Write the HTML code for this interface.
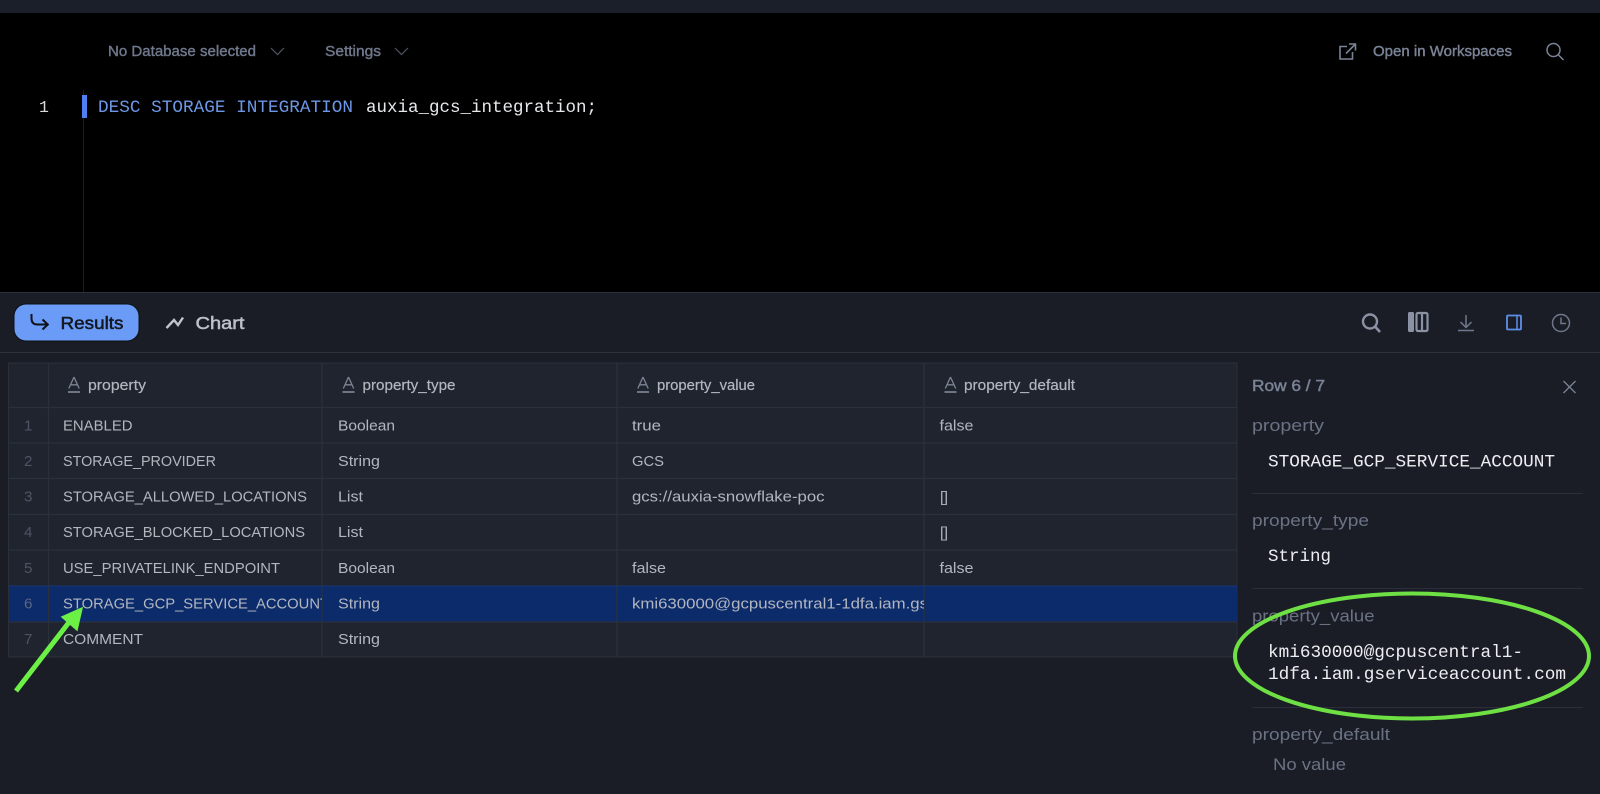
<!DOCTYPE html>
<html><head><meta charset="utf-8"><title>Results</title>
<style>
html,body{margin:0;padding:0;background:#1a1d26;width:1600px;height:794px;overflow:hidden}
svg{display:block}
text{font-family:"Liberation Sans",sans-serif}
.m{font-family:"Liberation Mono",monospace;font-size:17.7px}
.c{font-size:15.2px;fill:#b2b6bf}
.n{font-size:15.2px;fill:#4d5464}
.h{font-size:15.2px;fill:#b2b6bf;stroke:#b2b6bf;stroke-width:.2px}
.t{font-size:15.5px;fill:#7a8396;stroke:#7a8396;stroke-width:.45px}
.w{font-size:14.5px;fill:#6f788b;stroke:#6f788b;stroke-width:.4px}
.l{font-size:17px;fill:#6a7284}
.ln{fill:none;stroke:#2c313c;stroke-width:1}
.ic{fill:none;stroke:#7a8396;stroke-width:1.5}
</style></head><body>
<svg width="1600" height="794" viewBox="0 0 1600 794" xmlns="http://www.w3.org/2000/svg">
<defs>
<clipPath id="c1"><rect x="49" y="586" width="273" height="36"/></clipPath>
<clipPath id="c2"><rect x="618" y="586" width="306" height="36"/></clipPath>
<g id="A"><path d="M.8 11.500 L5.800 .5 H6.200 L11.200 11.500 M2.800 7.800 H9.200" fill="none" stroke="#7d8494" stroke-width="1.300"/><path d="M0 15 H12" stroke="#7d8494" stroke-width="1.700"/></g>
</defs>
<rect width="1600" height="794" fill="#1a1d26"/>
<rect y="13" width="1600" height="279" fill="#000"/>
<rect y="0" width="1600" height="13" fill="#1b1f29"/>
<path d="M83.500 90 V292" stroke="#1a1d26" stroke-width="1"/>

<text x="108" y="56" class="w" textLength="148" lengthAdjust="spacingAndGlyphs">No Database selected</text>
<path d="M271 48 L277.500 54.500 L284 48" class="ic" style="stroke:#4f5665;stroke-width:1.200"/>
<text x="325" y="56" class="w" textLength="56" lengthAdjust="spacingAndGlyphs">Settings</text>
<path d="M395 48 L401.500 54.500 L408 48" class="ic" style="stroke:#4f5665;stroke-width:1.200"/>

<g class="ic" style="stroke-width:1.600"><path d="M1347 46.500 H1340 V59 H1352.500 V52"/><path d="M1346 53.500 L1355 44.500 M1349 44 H1355.500 V50.500"/></g>
<text x="1373" y="56" class="w" style="fill:#7a8396;stroke:#7a8396" textLength="139" lengthAdjust="spacingAndGlyphs">Open in Workspaces</text>
<circle cx="1553.500" cy="50" r="6.500" class="ic"/><path d="M1558.500 55 L1563.500 60" class="ic"/>

<text x="39" y="112" style="font-family:'Liberation Mono',monospace;font-size:16.500px" fill="#d8dade">1</text>
<rect x="82" y="95" width="5" height="23" fill="#4f7ff0"/>
<text x="98" y="112" class="m" fill="#6d97e6" textLength="255" lengthAdjust="spacingAndGlyphs">DESC STORAGE INTEGRATION</text>
<text x="366" y="112" class="m" fill="#e6e8ec" textLength="231" lengthAdjust="spacingAndGlyphs">auxia_gcs_integration;</text>

<path d="M0 292.500 H1600 M0 352.500 H1600" class="ln"/>

<rect x="14" y="304" width="125" height="37" rx="12" fill="#6a9bf6" stroke="#0d1016" stroke-width="1"/>
<path d="M31.500 314 V318.500 Q31.500 324.500 37.500 324.500 H47 M42.500 319.500 L47.800 324.500 L42.500 329.500" fill="none" stroke="#0f1218" stroke-width="2"/>
<text x="60.500" y="329" font-size="17.500" fill="#14171f" stroke="#14171f" stroke-width=".5" textLength="63" lengthAdjust="spacingAndGlyphs">Results</text>
<path d="M166.500 328 L174 320 L178 325 L183 317.500" fill="none" stroke="#c0c4cc" stroke-width="2.400"/>
<text x="195.500" y="329" font-size="17.500" fill="#bcc0c9" stroke="#bcc0c9" stroke-width=".5" textLength="49" lengthAdjust="spacingAndGlyphs">Chart</text>

<circle cx="1370" cy="321.500" r="7" fill="none" stroke="#8a92a3" stroke-width="2.400"/><path d="M1375.500 327 L1380 332" stroke="#8a92a3" stroke-width="2.600"/>
<rect x="1408" y="312" width="6" height="20" rx="1.500" fill="#8a92a3"/>
<rect x="1416.500" y="313" width="11" height="18" rx="1.500" fill="none" stroke="#8a92a3" stroke-width="2.200"/><path d="M1422 313 V331" stroke="#8a92a3" stroke-width="2.200"/>
<path d="M1466 315 V327 M1460.500 322 L1466 327.500 L1471.500 322 M1458 330.500 H1474" fill="none" stroke="#6f788b" stroke-width="1.500"/>
<rect x="1507" y="315.500" width="14" height="14" rx="1" fill="none" stroke="#5e8fe8" stroke-width="1.800"/><path d="M1517 315.500 V329.500" stroke="#5e8fe8" stroke-width="1.500"/>
<circle cx="1561" cy="323" r="8.500" fill="none" stroke="#6f788b" stroke-width="1.500"/><path d="M1561 317.500 V323.500 H1566" fill="none" stroke="#6f788b" stroke-width="1.500"/>

<!-- table -->
<rect x="8.500" y="363" width="1228.500" height="294" fill="#1f242e" stroke="#2b303b" stroke-width="1"/>
<rect x="9" y="586" width="1228" height="36" fill="#0c2b6b"/>
<g stroke="#2b303b" stroke-width="1.300">
<path d="M8 407.500 H1237 M8 443 H1237 M8 478.500 H1237 M8 514.500 H1237 M8 550 H1237 M8 622 H1237"/>
<path d="M48.500 363 V657 M322 363 V657 M617 363 V657 M924 363 V657"/>
</g>
<path d="M8 586 H1237" stroke="#1a3672" stroke-width="1"/>

<use href="#A" x="68" y="377"/><text x="88" y="390" class="h" textLength="58" lengthAdjust="spacingAndGlyphs">property</text>
<use href="#A" x="342.500" y="377"/><text x="362.500" y="390" class="h" textLength="93" lengthAdjust="spacingAndGlyphs">property_type</text>
<use href="#A" x="637" y="377"/><text x="657" y="390" class="h" textLength="98" lengthAdjust="spacingAndGlyphs">property_value</text>
<use href="#A" x="944.500" y="377"/><text x="964" y="390" class="h" textLength="111" lengthAdjust="spacingAndGlyphs">property_default</text>

<text x="24" y="430.500" class="n">1</text><text x="24" y="466" class="n">2</text><text x="24" y="501.500" class="n">3</text><text x="24" y="537" class="n">4</text><text x="24" y="573" class="n">5</text><text x="24" y="608.500" class="n" style="fill:#5a6880">6</text><text x="24" y="644" class="n">7</text>

<text x="63" y="430.500" class="c" textLength="69.500" lengthAdjust="spacingAndGlyphs">ENABLED</text>
<text x="63" y="466" class="c" textLength="153" lengthAdjust="spacingAndGlyphs">STORAGE_PROVIDER</text>
<text x="63" y="501.500" class="c" textLength="244" lengthAdjust="spacingAndGlyphs">STORAGE_ALLOWED_LOCATIONS</text>
<text x="63" y="537" class="c" textLength="242" lengthAdjust="spacingAndGlyphs">STORAGE_BLOCKED_LOCATIONS</text>
<text x="63" y="573" class="c" textLength="217" lengthAdjust="spacingAndGlyphs">USE_PRIVATELINK_ENDPOINT</text>
<g clip-path="url(#c1)"><text x="63" y="608.500" class="c" textLength="266" lengthAdjust="spacingAndGlyphs">STORAGE_GCP_SERVICE_ACCOUNT</text></g>
<text x="63" y="644" class="c" textLength="80" lengthAdjust="spacingAndGlyphs">COMMENT</text>

<text x="338" y="430.500" class="c" textLength="57" lengthAdjust="spacingAndGlyphs">Boolean</text>
<text x="338" y="466" class="c" textLength="42" lengthAdjust="spacingAndGlyphs">String</text>
<text x="338" y="501.500" class="c" textLength="25" lengthAdjust="spacingAndGlyphs">List</text>
<text x="338" y="537" class="c" textLength="25" lengthAdjust="spacingAndGlyphs">List</text>
<text x="338" y="573" class="c" textLength="57" lengthAdjust="spacingAndGlyphs">Boolean</text>
<text x="338" y="608.500" class="c" textLength="42" lengthAdjust="spacingAndGlyphs">String</text>
<text x="338" y="644" class="c" textLength="42" lengthAdjust="spacingAndGlyphs">String</text>

<text x="632" y="430.500" class="c" textLength="29" lengthAdjust="spacingAndGlyphs">true</text>
<text x="632" y="466" class="c" textLength="32" lengthAdjust="spacingAndGlyphs">GCS</text>
<text x="632" y="501.500" class="c" textLength="192.500" lengthAdjust="spacingAndGlyphs">gcs://auxia-snowflake-poc</text>
<text x="632" y="573" class="c" textLength="34" lengthAdjust="spacingAndGlyphs">false</text>
<g clip-path="url(#c2)"><text x="632" y="608.500" class="c" textLength="296" lengthAdjust="spacingAndGlyphs">kmi630000@gcpuscentral1-1dfa.iam.gs</text></g>

<text x="939.500" y="430.500" class="c" textLength="34" lengthAdjust="spacingAndGlyphs">false</text>
<text x="940" y="502" class="c" textLength="8" lengthAdjust="spacing">[]</text>
<text x="940" y="537.500" class="c" textLength="8" lengthAdjust="spacing">[]</text>
<text x="939.500" y="573" class="c" textLength="34" lengthAdjust="spacingAndGlyphs">false</text>

<!-- side panel -->
<text x="1252" y="391" class="t" textLength="73" lengthAdjust="spacingAndGlyphs">Row 6 / 7</text>
<path d="M1563.500 381 L1575.500 393 M1575.500 381 L1563.500 393" class="ic" style="stroke-width:1.300"/>
<text x="1252" y="431" class="l" textLength="72" lengthAdjust="spacingAndGlyphs">property</text>
<text x="1268" y="466.500" class="m" fill="#eceef1" textLength="287" lengthAdjust="spacingAndGlyphs">STORAGE_GCP_SERVICE_ACCOUNT</text>
<path d="M1252 493.500 H1583 M1252 588.500 H1583 M1252 707.500 H1583" stroke="#2a2f3b" stroke-width="1"/>
<text x="1252" y="526" class="l" textLength="117" lengthAdjust="spacingAndGlyphs">property_type</text>
<text x="1268" y="561" class="m" fill="#eceef1" textLength="63" lengthAdjust="spacingAndGlyphs">String</text>
<text x="1252" y="621.500" class="l" textLength="122.500" lengthAdjust="spacingAndGlyphs">property_value</text>
<text x="1268" y="657" class="m" fill="#eceef1" textLength="255" lengthAdjust="spacingAndGlyphs">kmi630000@gcpuscentral1-</text>
<text x="1268" y="679" class="m" fill="#eceef1" textLength="298" lengthAdjust="spacingAndGlyphs">1dfa.iam.gserviceaccount.com</text>
<text x="1252" y="740" class="l" textLength="138" lengthAdjust="spacingAndGlyphs">property_default</text>
<text x="1273" y="770" class="l" textLength="73" lengthAdjust="spacingAndGlyphs">No value</text>

<!-- annotations -->
<ellipse cx="1412" cy="656" rx="177" ry="62.500" fill="none" stroke="#6ee044" stroke-width="4"/>
<path d="M16 691 L70 621" stroke="#6df046" stroke-width="5" fill="none"/>
<path d="M82 608 L62 617 L77 630 Z" fill="#6df046" stroke="#6df046" stroke-width="1.500"/>
</svg>
</body></html>
